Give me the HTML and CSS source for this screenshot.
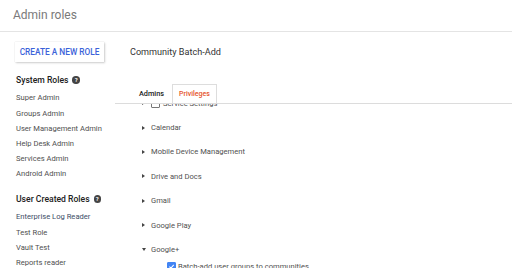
FILE: index.html
```html
<!DOCTYPE html>
<html>
<head>
<meta charset="utf-8">
<link rel="stylesheet" href="styles.css">
</head>
<body>
<header class="topbar"><h1 class="title">Admin roles</h1></header>
<div class="main">
  <aside class="sidebar">
    <button class="create-btn">CREATE A NEW ROLE</button>
    <h2 class="group-head">System Roles <span class="help">?</span></h2>
    <ul class="role-list">
      <li>Super Admin</li>
      <li>Groups Admin</li>
      <li>User Management Admin</li>
      <li>Help Desk Admin</li>
      <li>Services Admin</li>
      <li>Android Admin</li>
    </ul>
    <h2 class="group-head second">User Created Roles <span class="help">?</span></h2>
    <ul class="role-list">
      <li class="active">Enterprise Log Reader</li>
      <li>Test Role</li>
      <li>Vault Test</li>
      <li>Reports reader</li>
    </ul>
  </aside>
  <section class="panel">
    <div class="role-name">Community Batch-Add</div>
    <div class="tabs">
      <div class="tab">Admins</div>
      <div class="tab selected">Privileges</div>
    </div>
    <div class="priv-view">
      <ul class="priv-list">
        <li class="priv"><span class="tri right"></span><span class="cb"></span>Service Settings</li>
        <li class="priv"><span class="tri right"></span>Calendar</li>
        <li class="priv"><span class="tri right"></span>Mobile Device Management</li>
        <li class="priv"><span class="tri right"></span>Drive and Docs</li>
        <li class="priv"><span class="tri right"></span>Gmail</li>
        <li class="priv"><span class="tri right"></span>Google Play</li>
        <li class="priv"><span class="tri down"></span>Google+</li>
        <li class="priv sub"><span class="cb checked"><svg viewBox="0 0 10 10" width="9" height="9"><path d="M2 5.2 L4.2 7.3 L8.2 2.8" fill="none" stroke="#fff" stroke-width="1.5"/></svg></span>Batch-add user groups to communities</li>
      </ul>
    </div>
  </section>
</div>
</body>
</html>
```
FILE: styles.css
```css
* { box-sizing: border-box; }
html, body { margin: 0; padding: 0; background: #fff; }
body {
  font-family: Roboto, "Liberation Sans", Arial, sans-serif;
  color: #333;
  width: 512px;
  height: 268px;
  overflow: hidden;
}
.topbar {
  height: 32px;
  border-bottom: 1px solid #e4e4e4;
  padding-left: 13px;
  display: flex;
  align-items: center;
}
.title {
  margin: 0;
  font-size: 12px;
  font-weight: 400;
  color: #7a7a7a;
  line-height: 1;
  padding-bottom: 1px;
}
.main { display: flex; }
.sidebar { width: 115px; padding-left: 15px; padding-top: 10px; flex: none; }
.create-btn {
  display: block;
  width: 89px;
  height: 20px;
  padding: 0;
  border: none;
  background: #fff;
  box-shadow: 0 0 1px rgba(0,0,0,0.18), 1px 1px 2px rgba(0,0,0,0.18);
  font-family: inherit;
  font-size: 8.3px;
  font-weight: 500;
  color: #3b62d9;
  letter-spacing: 0;
  text-align: center;
}
.group-head {
  margin: 11px 0 3.4px 1px;
  font-size: 8.6px;
  font-weight: 500;
  color: #212121;
  line-height: 14px;
  display: flex;
  align-items: center;
  gap: 4px;
}
.group-head.second { margin-top: 10.4px; }
.help {
  width: 7.5px;
  height: 7.5px;
  border-radius: 50%;
  background: #444;
  color: #fff;
  font-size: 6px;
  font-weight: 700;
  line-height: 7.5px;
  text-align: center;
  display: inline-block;
}
.role-list {
  list-style: none;
  margin: 0;
  padding: 0 0 0 1px;
  font-size: 7.6px;
  line-height: 15.2px;
  color: #4f4f4f;
  white-space: nowrap;
}
.role-list li.active { color: #3c4d66; }
.panel { flex: 1; display: flex; flex-direction: column; }
.role-name {
  margin-top: 10px;
  padding-left: 15px;
  height: 20px;
  line-height: 20px;
  font-size: 9.1px;
  color: #333;
}
.tabs {
  margin-top: 22px;
  display: flex;
  align-items: flex-end;
  padding-left: 16px;
  border-bottom: 1px solid #dcdcdc;
  height: 20px;
}
.tab {
  height: 19px;
  line-height: 18px;
  padding: 0 7px;
  font-size: 7.3px;
  font-weight: 500;
  color: #222;
  border: 1px solid transparent;
  border-bottom: none;
}
.tab.selected {
  border-color: #ddd;
  color: #e5542b;
  font-size: 7px;
  padding: 0 6px 0 6px;
}
.priv-view {
  height: 200px;
  overflow: hidden;
}
.priv-list {
  list-style: none;
  margin: -13px 0 0 0;
  padding: 0 0 0 27px;
  font-size: 7.6px;
  color: #505050;
}
.priv {
  height: 24.4px;
  display: flex;
  align-items: center;
  white-space: nowrap;
}
.priv.sub { padding-left: 25px; height: 17px; margin-top: -4px; }
.tri {
  width: 0; height: 0;
  display: inline-block;
  margin-right: 6px;
}
.tri.right {
  border-top: 2px solid transparent;
  border-bottom: 2px solid transparent;
  border-left: 3px solid #444;
}
.tri.down {
  border-left: 2px solid transparent;
  border-right: 2px solid transparent;
  border-top: 3px solid #444;
  margin-right: 5px;
}
.cb {
  width: 9px;
  height: 9px;
  border: 1px solid #777;
  border-radius: 1px;
  display: inline-flex;
  align-items: center;
  justify-content: center;
  margin-right: 3px;
  margin-left: 0;
  background: #fff;
}
.cb.checked {
  border-color: #4285f4;
  background: #4285f4;
  margin-right: 2px;
}
.cb.checked svg { display: block; }
```
